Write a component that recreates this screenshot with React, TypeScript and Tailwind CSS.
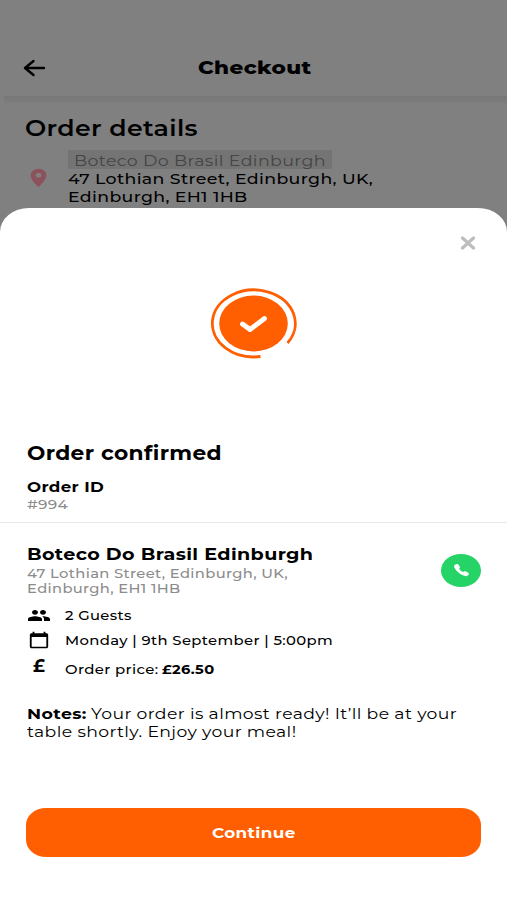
import { useLayoutEffect, useRef, useState } from 'react';
import type { ReactNode } from 'react';
import { MdPeople, MdCalendarToday, MdLocationOn } from 'react-icons/md';
import { IoCall } from 'react-icons/io5';
import clsx from 'clsx';

interface WideTextProps {
  className?: string;
  children: ReactNode;
}

// Single line of text stretched to fill the width given in className
const WideText = ({ className, children }: WideTextProps) => {
  const boxRef = useRef<HTMLDivElement>(null);
  const textRef = useRef<HTMLSpanElement>(null);
  const [scale, setScale] = useState(1);

  useLayoutEffect(() => {
    if (boxRef.current && textRef.current) {
      setScale(boxRef.current.clientWidth / textRef.current.offsetWidth);
    }
  }, []);

  return (
    <div ref={boxRef} className={clsx('whitespace-nowrap', className)}>
      <span ref={textRef} className="inline-block origin-left" style={{ transform: `scaleX(${scale})` }}>
        {children}
      </span>
    </div>
  );
};

const Header = () => (
  <header className="relative flex h-[96px] shrink-0 items-end justify-center pb-[16px]">
    <svg viewBox="0 0 24 18" className="absolute left-[23px] top-[59px] h-[18px] w-[24px]" fill="none" stroke="black" strokeWidth="2.4" strokeLinecap="round" strokeLinejoin="round">
      <path d="M21 9H2M10.500 2L2 9l8.500 7" />
    </svg>
    <WideText className="ml-px w-[113px] text-[17.5px] font-extrabold leading-[24px]">Checkout</WideText>
  </header>
);

const OrderDetails = () => (
  <section className="h-[112px] shrink-0">
    <div className="ml-1 h-[7px] bg-linear-to-b from-[#777777] to-[#7d7d7d]" />
    <WideText className="ml-[25px] mt-[11px] w-[173px] text-[22px] font-semibold leading-[30px]">Order details</WideText>
    <div className="mt-[6px] flex">
      <MdLocationOn className="ml-[25px] mr-[16px] mt-[17px] h-[22px] w-[27px] text-[#8c525b]" preserveAspectRatio="none" />
      <div>
        <div className="h-[19px] w-[264px] bg-[#747474] pl-[6px] text-[#454545]">
          <WideText className="w-[252px] text-[15px] leading-[21px]">Boteco Do Brasil Edinburgh</WideText>
        </div>
        <WideText className="mt-px w-[305px] text-[15.5px] font-medium leading-[18px]">47 Lothian Street, Edinburgh, UK,</WideText>
        <WideText className="w-[180px] text-[15.5px] font-medium leading-[18px]">Edinburgh, EH1 1HB</WideText>
      </div>
    </div>
  </section>
);

const SuccessBadge = () => (
  <svg viewBox="0 0 88 72" className="mx-auto mt-[29px] h-[72px] w-[88px]" fill="none">
    <ellipse cx="43.500" cy="36.500" rx="34.300" ry="28" fill="#ff5f00" />
    <path d="M50.500 69.500A41.500 33.500 0 1 1 77.500 56" stroke="#ff5f00" strokeWidth="2.800" />
    <path d="M32.500 37L40 42.500L54.500 31.500" stroke="white" strokeWidth="4.800" strokeLinecap="round" strokeLinejoin="round" />
  </svg>
);

const App = () => {
  return (
    <div className="flex h-[900px] w-[507px] flex-col overflow-hidden bg-[#808080] font-['Montserrat','Inter',sans-serif] tracking-[0.02em] text-black">
      <Header />
      <OrderDetails />

      <main className="flex grow flex-col bg-white [border-radius:29px_29px_0_0/24px_24px_0_0]">
        <button className="ml-auto mr-[31px] mt-[28px]" aria-label="Close">
          <svg viewBox="0 0 16 14" className="block h-[14px] w-[16px]" fill="none" stroke="#bdbdbd" strokeWidth="3.200" strokeLinecap="round">
            <path d="M2.500 2L13.500 12M13.500 2L2.500 12" />
          </svg>
        </button>

        <div className="h-[192px] pt-[8px]">
          <SuccessBadge />
        </div>

        <div className="h-[81px] border-b border-[#e9e9e9] pl-[27px]">
          <WideText className="-mt-px w-[195px] text-[19.5px] font-bold leading-[24px]">Order confirmed</WideText>
          <WideText className="mt-[12px] w-[77px] text-[14.5px] font-bold leading-[20px]">Order ID</WideText>
          <WideText className="w-[41px] text-[13px] font-medium leading-[14px] text-[#8c8c8c]">#994</WideText>
        </div>

        <div className="flex px-[26px] pt-[19px]">
          <div className="grow pl-px">
            <WideText className="w-[286px] text-[16.5px] font-bold leading-[24px]">Boteco Do Brasil Edinburgh</WideText>
            <WideText className="w-[261px] text-[13px] font-medium leading-[15px] text-[#8c8c8c]">47 Lothian Street, Edinburgh, UK,</WideText>
            <WideText className="w-[154px] text-[13px] font-medium leading-[15px] text-[#8c8c8c]">Edinburgh, EH1 1HB</WideText>
          </div>
          <div className="mt-[12px] flex h-[33px] w-[40px] items-center justify-center rounded-[50%] bg-[#25d366] pb-px">
            <IoCall className="h-[14px] w-[17px] text-white" preserveAspectRatio="none" />
          </div>
        </div>

        <div className="px-[27px] pt-[7px] text-[13px] font-medium">
          <div className="flex h-[25px] items-center">
            <MdPeople className="mr-[15px] h-[19px] w-[24px]" preserveAspectRatio="none" />
            <WideText className="-ml-px w-[67px]">2 Guests</WideText>
          </div>
          <div className="flex h-[24px] items-center">
            <MdCalendarToday className="ml-px mr-[15px] h-[18px] w-[22px]" preserveAspectRatio="none" />
            <WideText className="mt-px w-[268px]">Monday | 9th September | 5:00pm</WideText>
          </div>
          <div className="flex h-[34px] items-center">
            <WideText className="-mt-[7px] ml-[6px] mr-[20px] w-[12px] text-[18px] font-bold leading-[24px]">£</WideText>
            <WideText className="mt-px w-[94px]">Order price:</WideText>
            <WideText className="ml-[3px] mt-px w-[53px] font-bold">£26.50</WideText>
          </div>
        </div>

        <div className="pl-[27px] pt-[19px] text-[14.5px] leading-[18px]">
          <div className="flex">
            <WideText className="w-[60px] font-bold">Notes:</WideText>
            <WideText className="ml-[4px] w-[366px]">Your order is almost ready! It’ll be at your</WideText>
          </div>
          <WideText className="w-[270px]">table shortly. Enjoy your meal!</WideText>
        </div>

        <button className="mx-[26px] mb-[43px] mt-auto flex h-[49px] items-center justify-center bg-[#ff5f00] pt-px text-white [border-radius:20px/17px]">
          <WideText className="w-[84px] text-left text-[14px] font-bold">Continue</WideText>
        </button>
      </main>
    </div>
  );
};

export default App;
